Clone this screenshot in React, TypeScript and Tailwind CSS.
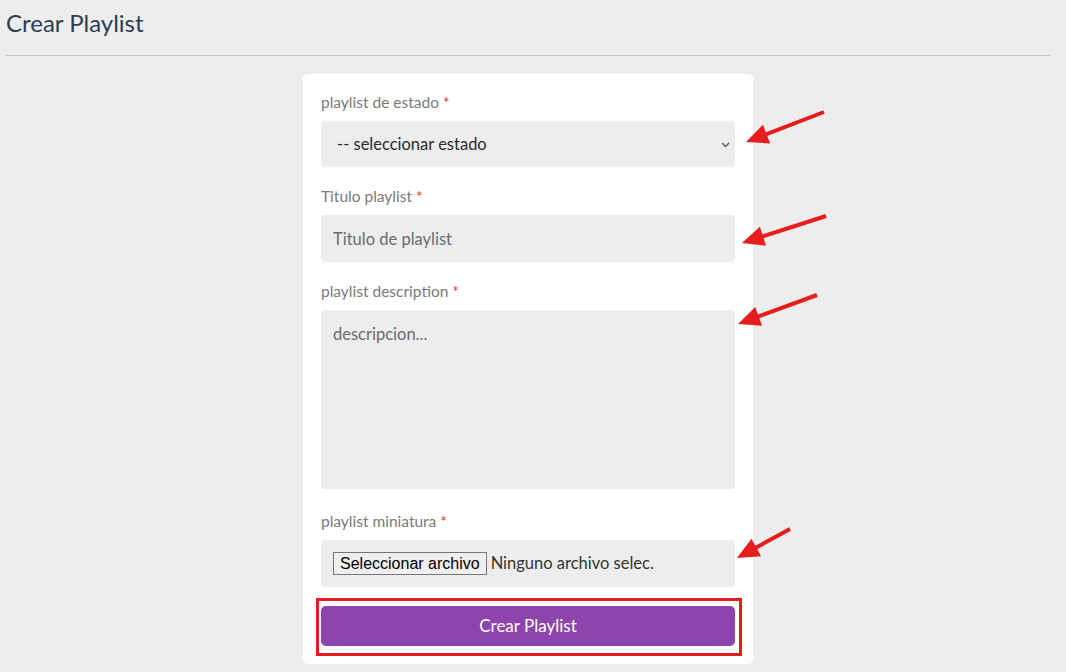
import React from "react";

type Arrow = { tail: [number, number]; tip: [number, number] };

const arrows: Arrow[] = [
  { tail: [824, 112], tip: [746, 142] },
  { tail: [826, 216], tip: [742, 243] },
  { tail: [817, 295], tip: [738, 324] },
  { tail: [790, 529], tip: [737, 558] },
];

function ArrowMark({ tail, tip }: Arrow) {
  const dx = tip[0] - tail[0];
  const dy = tip[1] - tail[1];
  const len = Math.hypot(dx, dy);
  const ux = dx / len;
  const uy = dy / len;
  const nx = -uy;
  const ny = ux;
  const headLen = 22;
  const half = 10;
  const bx = tip[0] - ux * headLen;
  const by = tip[1] - uy * headLen;
  const pts = `${tip[0]},${tip[1]} ${bx + nx * half},${by + ny * half} ${bx - nx * half},${by - ny * half}`;
  return (
    <g>
      <line x1={tail[0]} y1={tail[1]} x2={bx + ux * 2} y2={by + uy * 2} stroke="#e51d1d" strokeWidth={4} />
      <polygon points={pts} fill="#e51d1d" />
    </g>
  );
}

function Label({ children }: { children: React.ReactNode }) {
  return (
    <label className="block text-[15.5px] leading-[21px] text-[#7a7a7a] mb-[8px]">
      {children} <span className="text-[#e3342f]">*</span>
    </label>
  );
}

export default function App() {
  return (
    <div
      className="relative min-h-[672px] bg-[#ededed] text-[#333]"
      style={{ fontFamily: "Lato, 'Noto Sans', sans-serif" }}
    >
      <div className="ml-[6px] mr-[16px]">
        {/* header */}
        <div className="border-b border-[#c4c4c4] pt-[8px] h-[56px]">
          <h1 className="text-[24px] leading-[30px] text-[#2c3e50]">Crear Playlist</h1>
        </div>

        {/* card */}
        <div className="flex justify-center pt-[18px]">
          <div className="w-[450px] bg-white rounded-[5px] px-[18px] pt-[18px] pb-[8px]">
            <div className="mb-[19px]">
              <Label>playlist de estado</Label>
              <div className="relative">
                <select className="w-full h-[46px] appearance-none bg-[#ededed] rounded-[4px] pl-[16px] text-[16.5px] text-[#2b2b2b] outline-none">
                  <option>-- seleccionar estado</option>
                </select>
                <svg
                  className="absolute right-[5px] top-[20px]"
                  width="9"
                  height="7"
                  viewBox="0 0 9 7"
                  fill="none"
                  stroke="#555"
                  strokeWidth="1.3"
                >
                  <path d="M1 2l3.5 3.5L8 2" />
                </svg>
              </div>
            </div>

            <div className="mb-[19px]">
              <Label>Titulo playlist</Label>
              <input
                className="w-full h-[47px] bg-[#ededed] rounded-[4px] px-[12px] text-[16.5px] outline-none placeholder:text-[#6b6b6b]"
                placeholder="Titulo de playlist"
              />
            </div>

            <div className="mb-[22px]">
              <Label>playlist description</Label>
              <textarea
                className="block w-full h-[179px] bg-[#ededed] rounded-[4px] px-[12px] py-[12px] text-[16.5px] outline-none resize-none placeholder:text-[#6b6b6b]"
                placeholder="descripcion..."
              />
            </div>

            <div className="mb-[11px]">
              <Label>playlist miniatura</Label>
              <div className="flex items-center h-[47px] bg-[#ededed] rounded-[4px] px-[12px]">
                <span
                  className="border border-[#767676] bg-[#efefef] text-black text-[16px] leading-[19px] px-[6px] py-[1px] mr-[4px]"
                  style={{ fontFamily: "'Liberation Sans', Arial, sans-serif" }}
                >
                  Seleccionar archivo
                </span>
                <span className="text-[16.5px] text-[#333]">Ninguno archivo selec.</span>
              </div>
            </div>

            <div className="-ml-[5px] -mr-[7px] border-[3px] border-[#e51d1d] pl-[2px] pr-[4px] pt-[5px] pb-[7px]">
              <button className="w-full h-[40px] bg-[#8e44ad] rounded-[5px] text-white text-[17px]">
                Crear Playlist
              </button>
            </div>
          </div>
        </div>
      </div>

      {/* annotation arrows */}
      <svg className="absolute inset-0 pointer-events-none" width="1066" height="672">
        {arrows.map((a, i) => (
          <ArrowMark key={i} {...a} />
        ))}
      </svg>
    </div>
  );
}
